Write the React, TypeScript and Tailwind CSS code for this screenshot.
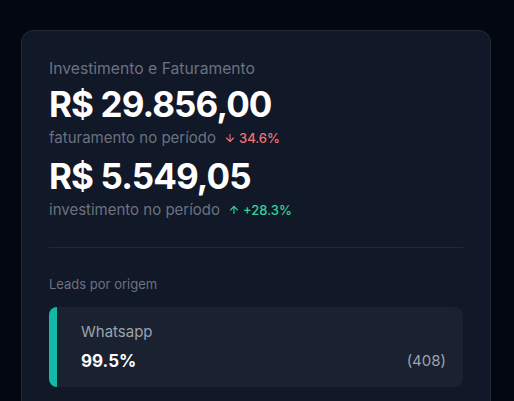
import React from "react";

export default function App() {
  return (
    <div
      className="min-h-[401px] w-full bg-[#030712] pt-[30px] pl-[21px]"
      style={{ fontFamily: "Inter, 'Noto Sans', sans-serif" }}
    >
      <div className="w-[470px] h-[400px] rounded-[12px] border border-[#1f2937] bg-[#111827] px-[27px] pt-[28px]">
        <div className="text-[15.7px] leading-[20px] text-[#6b7280]">Investimento e Faturamento</div>
        <div className="mt-[5px] text-[35px] leading-[40px] font-bold text-white tracking-[-0.9px]">R$ 29.856,00</div>
        <div className="mt-[4px] flex items-center gap-[8px] text-[15px] leading-[20px]">
          <span className="text-[#6b7280]">faturamento no período</span>
          <span className="flex items-center gap-[3px] text-[13px] font-medium text-[#f87171]">
            <svg width="12" height="12" viewBox="0 0 24 24" fill="none" stroke="currentColor" strokeWidth="2.2" strokeLinecap="round" strokeLinejoin="round">
              <path d="M12 5v14" />
              <path d="m19 12-7 7-7-7" />
            </svg>
            34.6%
          </span>
        </div>
        <div className="mt-[8px] text-[35px] leading-[40px] font-bold text-white tracking-[-0.9px]">R$ 5.549,05</div>
        <div className="mt-[4px] flex items-center gap-[8px] text-[15px] leading-[20px]">
          <span className="text-[#6b7280]">investimento no período</span>
          <span className="flex items-center gap-[3px] text-[13px] font-medium text-[#34d399]">
            <svg width="12" height="12" viewBox="0 0 24 24" fill="none" stroke="currentColor" strokeWidth="2.2" strokeLinecap="round" strokeLinejoin="round">
              <path d="m5 12 7-7 7 7" />
              <path d="M12 19V5" />
            </svg>
            +28.3%
          </span>
        </div>
        <div className="mt-[27px] h-px bg-[#1f2937]" />
        <div className="mt-[27px] text-[13px] leading-[18px] text-[#6b7280]">Leads por origem</div>
        <div className="mt-[14px] flex h-[80px] rounded-[8px] bg-[#1a2130] overflow-hidden">
          <div className="w-[8px] bg-[#14b8a6]" />
          <div className="flex flex-1 flex-col justify-center pl-[24px] pr-[17px]">
            <div className="text-[15px] leading-[20px] text-[#9ca3af]">Whatsapp</div>
            <div className="mt-[8px] flex items-center justify-between">
              <span className="text-[17px] leading-[22px] font-bold text-white">99.5%</span>
              <span className="text-[15px] leading-[20px] text-[#9ca3af]">(408)</span>
            </div>
          </div>
        </div>
      </div>
    </div>
  );
}
